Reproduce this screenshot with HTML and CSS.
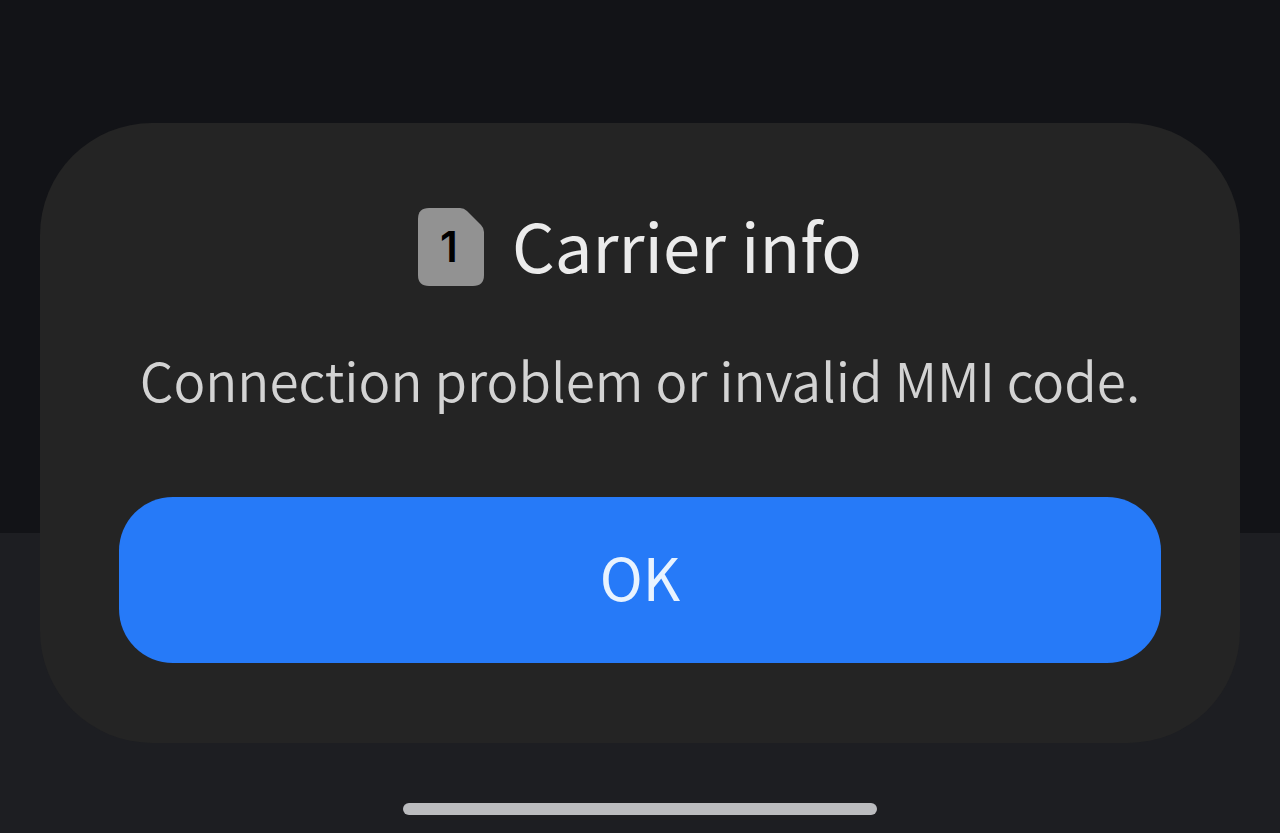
FILE: index.html
```html
<!DOCTYPE html>
<html lang="en">
<head>
    <meta charset="UTF-8">
    <meta name="viewport" content="width=device-width, initial-scale=1.0">
    <title>Carrier info</title>
    <link rel="stylesheet" href="styles.css">
</head>
<body>
    <main class="dialog" role="alertdialog" aria-labelledby="title" aria-describedby="message">
        <div class="header">
            <svg class="sim" viewBox="0 0 66 78" role="img" aria-label="SIM 1">
                <path fill="#929292" d="M11 0H42Q46 0 49 3L63 17Q66 20 66 24V67Q66 78 55 78H11Q0 78 0 67V11Q0 0 11 0Z"/>
                <text class="sim-number" x="31" y="54" text-anchor="middle">1</text>
            </svg>
            <h1 id="title">Carrier info</h1>
        </div>
        <p id="message" class="message">Connection problem or invalid MMI code.</p>
        <button class="ok" type="button">OK</button>
    </main>
    <div class="home-bar"></div>
</body>
</html>
```

FILE: styles.css
```css
* {
    box-sizing: border-box;
}
body {
    margin: 0;
    min-height: 100vh;
    padding: 123px 40px 18px;
    display: flex;
    flex-direction: column;
    justify-content: space-between;
    background: linear-gradient(#121317 64%, #1d1e22 64%);
    font-family: "Noto Sans CJK SC", "Noto Sans", sans-serif;
}
.dialog {
    padding: 80px 79px;
    border-radius: 112px;
    background: #242424;
    text-align: center;
}
.header {
    display: flex;
    align-items: center;
    justify-content: center;
    gap: 28px;
}
.sim {
    width: 66px;
    height: 78px;
}
.sim-number {
    font-family: Inter, sans-serif;
    font-size: 42px;
    font-weight: 600;
    fill: #000;
}
h1 {
    margin: 0;
    padding-bottom: 6px;
    font-size: 67px;
    font-weight: 400;
    line-height: 82px;
    color: #ebebeb;
}
.message {
    margin: 48px 0 78px;
    font-size: 53px;
    font-weight: 350;
    line-height: 80px;
    white-space: nowrap;
    color: #d3d3d3;
}
.ok {
    display: block;
    width: 100%;
    padding: 39px 0 47px;
    border: none;
    border-radius: 54px;
    background: #267af8;
    font-family: inherit;
    font-size: 58px;
    line-height: 80px;
    color: #e8f3ff;
    cursor: pointer;
}
.home-bar {
    width: 474px;
    max-width: 60%;
    height: 12px;
    margin: 0 auto;
    border-radius: 6px;
    background: #bbbcbf;
}
```
